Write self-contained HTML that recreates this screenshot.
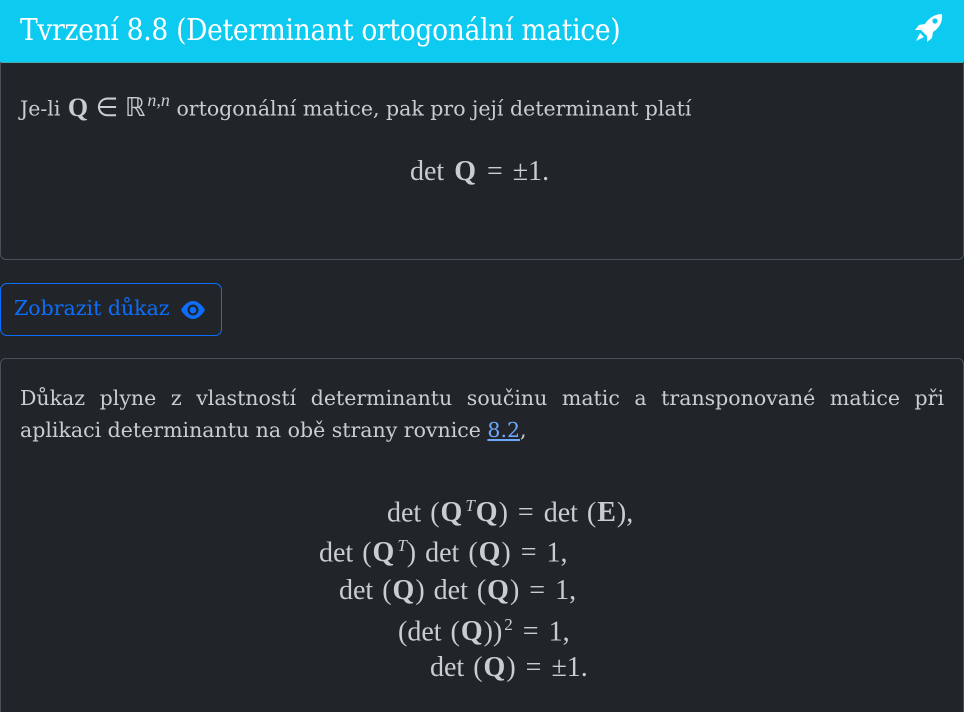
<!DOCTYPE html>
<html style="height:712px;overflow:hidden"><head><meta charset="utf-8"><style>
body{margin:0;background:#212529;width:964px;height:712px;overflow:hidden;position:relative;font-family:"DejaVu Serif",serif;color:#c9cdd1}
.hdr{position:absolute;left:0;top:0;width:964px;height:62px;background:#0dcaf0;border-bottom:1px solid #4aa;}
.hdr .t{position:absolute;left:20px;top:13px;font-family:"DejaVu Serif Condensed","DejaVu Serif",serif;font-size:29.5px;color:#fff;letter-spacing:-0.3px}
.c1{position:absolute;left:0;top:62px;width:962px;height:197px;border:1px solid #495057;border-top:none;border-radius:0 0 6px 6px}
.btn{position:absolute;left:0;top:283px;width:220px;height:51px;border:1px solid #0d6efd;border-radius:7px;color:#0d6efd;font-size:20.5px}
.btn span{position:absolute;left:13px;top:12px}
.c2{position:absolute;left:0;top:358px;width:962px;height:360px;border:1px solid #495057;border-radius:6px}
.m{font-family:"Liberation Serif",serif;font-size:28px;position:absolute;white-space:nowrap;word-spacing:2px}
.m i{font-style:normal;margin:0 10px}
.p{position:absolute;font-size:20.5px;line-height:32px}
b{font-family:"Liberation Serif",serif;margin:0 1px}
sup{margin-left:2px}
</style></head><body>
<div class="hdr"><div class="t">Tvrzení 8.8 (Determinant ortogonální matice)</div>
<svg style="position:absolute;left:914px;top:13px" width="32" height="30" viewBox="0 0 32 30"><path d="M28 1C20 1 14 6 11 11L5 12 1 17 7 17 13 23 13 29 18 25 19 19C24 16 29 10 28 1Z" fill="#fff"/><circle cx="21" cy="8" r="2.6" fill="#0dcaf0"/><path d="M6 20 2 28 10 24Z" fill="#fff"/></svg></div>
<div class="c1"></div>
<div class="p" style="left:20px;top:84px">Je-li <b style="font-size:26px">Q</b> <span style="font-family:'Liberation Serif';font-size:26px">∈ ℝ<sup style="font-size:18px;font-style:italic">n,n</sup></span> ortogonální matice, pak pro její determinant platí</div>
<div class="m" style="left:410px;top:156px">det <b>Q</b><i>=</i>±1.</div>
<div class="btn"><span>Zobrazit důkaz</span><svg style="position:absolute;left:179px;top:17px" width="26" height="18" viewBox="0 0 26 18"><path d="M1 9C5 2 10 0 13 0S21 2 25 9C21 16 16 18 13 18S5 16 1 9Z" fill="#0d6efd"/><circle cx="13" cy="9" r="5.5" fill="#212529"/><circle cx="13" cy="9" r="3.3" fill="#0d6efd"/></svg></div>
<div class="c2"></div>
<div class="p" style="left:20px;top:382px;width:924px;text-align:justify;text-align-last:left">Důkaz plyne z vlastností determinantu součinu matic a transponované matice při aplikaci determinantu na obě strany rovnice <span style="color:#6ea8fe;text-decoration:underline">8.2</span>,</div>
<div class="m" style="left:387px;top:496px">det (<b>Q</b><sup style="font-size:17px;font-style:italic">T</sup><b>Q</b>)<i>=</i>det (<b>E</b>),</div>
<div class="m" style="left:319px;top:536px">det (<b>Q</b><sup style="font-size:17px;font-style:italic">T</sup>) det (<b>Q</b>)<i>=</i>1,</div>
<div class="m" style="left:339px;top:575px">det (<b>Q</b>) det (<b>Q</b>)<i>=</i>1,</div>
<div class="m" style="left:398px;top:615px">(det (<b>Q</b>))<sup style="font-size:17px">2</sup><i>=</i>1,</div>
<div class="m" style="left:430px;top:652px">det (<b>Q</b>)<i>=</i>±1.</div>
</body></html>
